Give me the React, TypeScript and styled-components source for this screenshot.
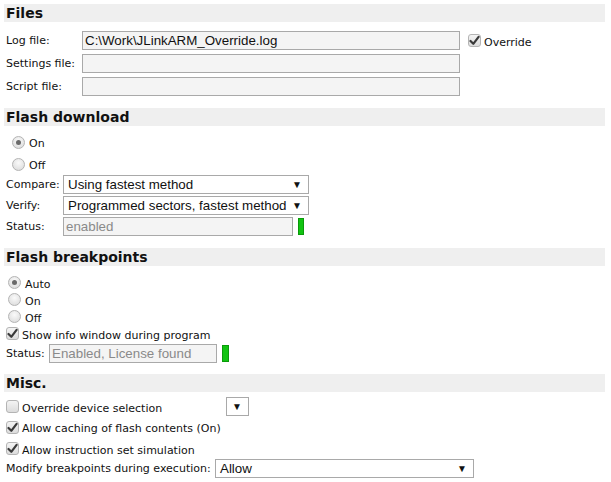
import React from "react";
import styled, {createGlobalStyle} from "styled-components";

const GlobalStyle = createGlobalStyle`
    html, body {
        margin: 0;
        padding: 0;
        background: #ffffff;
    }
    body {
        font-family: "DejaVu Sans", Verdana, sans-serif;
        font-size: 11px;
        color: #111111;
    }
`

const Page = styled.div`
    box-sizing: border-box;
    width: 611px;
    padding: 4px 6px 0 4px;
    display: flex;
    flex-direction: column;
`

const SectionHeader = styled.div`
    box-sizing: border-box;
    height: 18px;
    padding-left: 2px;
    background: #efefef;
    font-weight: bold;
    font-size: 14px;
    line-height: 18px;
    color: #111111;
`

const SectionBody = styled.div<{ $pad: string }>`
    display: flex;
    flex-direction: column;
    padding: ${({$pad}) => $pad};
`

const Row = styled.div<{ $height?: number; $gap?: number; $indent?: number }>`
    display: flex;
    align-items: center;
    height: ${({$height}) => $height ?? 19}px;
    margin-top: ${({$gap}) => $gap ?? 0}px;
    padding-left: ${({$indent}) => $indent ?? 2}px;
`

const Label = styled.span<{ $width?: number; $drop?: number }>`
    width: ${({$width}) => ($width ? `${$width}px` : "auto")};
    flex-shrink: 0;
    white-space: nowrap;
    padding-top: ${({$drop}) => $drop ?? 0}px;
`

const TextField = styled.div<{ $width: number; $muted?: boolean }>`
    box-sizing: border-box;
    width: ${({$width}) => $width}px;
    height: 19px;
    border: 1px solid #a9a9a9;
    background: #f4f4f4;
    padding-left: 2px;
    font-family: "Liberation Sans", Arial, sans-serif;
    font-size: 13.33px;
    line-height: 17px;
    color: ${({$muted}) => ($muted ? "#8a8a8a" : "#111111")};
    white-space: nowrap;
    overflow: hidden;
`

const SelectBox = styled.div<{ $width: number }>`
    box-sizing: border-box;
    width: ${({$width}) => $width}px;
    height: 19px;
    border: 1px solid #a9a9a9;
    background: #ffffff;
    padding: 0 6px 0 4px;
    display: flex;
    align-items: center;
    font-family: "Liberation Sans", Arial, sans-serif;
    font-size: 13.33px;
    color: #111111;
    white-space: nowrap;
`

const Arrow = styled.span`
    font-size: 10px;
    color: #111111;
    margin-left: auto;
`

const StatusLed = styled.div<{ $width: number }>`
    width: ${({$width}) => $width}px;
    height: 17px;
    margin-left: 5px;
    background: #11c411;
    border: 1px solid #0a9a0a;
    box-sizing: border-box;
`

const RadioCircle = styled.span<{ $checked?: boolean }>`
    box-sizing: border-box;
    position: relative;
    width: 13px;
    height: 13px;
    border-radius: 50%;
    border: 1px solid #b4b4b4;
    background: radial-gradient(circle at 50% 35%, #fafafa 0%, #e2e2e2 70%, #d4d4d4 100%);
    margin-right: 4px;
    flex-shrink: 0;

    &::after {
        content: "";
        display: ${({$checked}) => ($checked ? "block" : "none")};
        position: absolute;
        left: 3px;
        top: 3px;
        width: 5px;
        height: 5px;
        border-radius: 50%;
        background: #6a6a6a;
    }
`

const CheckBoxBox = styled.span`
    box-sizing: border-box;
    width: 13px;
    height: 13px;
    border-radius: 3px;
    border: 1px solid #b4b4b4;
    background: linear-gradient(#f4f4f4, #dcdcdc);
    margin-right: 3px;
    flex-shrink: 0;
    display: flex;
    align-items: center;
    justify-content: center;
`

const CheckBox: React.FC<{ checked?: boolean }> = ({checked}) => (
    <CheckBoxBox>
        {checked && (
            <svg width="11" height="11" viewBox="0 0 11 11">
                <path d="M1.5 6 L4.3 8.8 L9.6 1.8" fill="none" stroke="#3a3a3a" strokeWidth="2.2"
                      strokeLinecap="round" strokeLinejoin="round"/>
            </svg>
        )}
    </CheckBoxBox>
)

const Radio: React.FC<{ checked?: boolean; label: string; indent: number; height: number }> = (props) => (
    <Row $height={props.height} $indent={props.indent}>
        <RadioCircle $checked={props.checked}/>
        <Label $drop={3}>{props.label}</Label>
    </Row>
)

const Spacer = styled.span<{ $width: number }>`
    width: ${({$width}) => $width}px;
    flex-shrink: 0;
`

export default function App() {
    return (
        <>
            <GlobalStyle/>
            <Page>
                <SectionHeader>Files</SectionHeader>
                <SectionBody $pad="9px 0 12px 0">
                    <Row>
                        <Label $width={76}>Log file:</Label>
                        <TextField $width={378}>C:\Work\JLinkARM_Override.log</TextField>
                        <Spacer $width={8}/>
                        <CheckBox checked/>
                        <Label $drop={3}>Override</Label>
                    </Row>
                    <Row $gap={4}>
                        <Label $width={76}>Settings file:</Label>
                        <TextField $width={378}/>
                    </Row>
                    <Row $gap={4}>
                        <Label $width={76}>Script file:</Label>
                        <TextField $width={378}/>
                    </Row>
                </SectionBody>

                <SectionHeader>Flash download</SectionHeader>
                <SectionBody $pad="5px 0 12px 0">
                    <Radio checked label="On" indent={8} height={22}/>
                    <Radio label="Off" indent={8} height={22}/>
                    <Row>
                        <Label $width={57}>Compare:</Label>
                        <SelectBox $width={246}>Using fastest method<Arrow>▼</Arrow></SelectBox>
                    </Row>
                    <Row $gap={2}>
                        <Label $width={57}>Verify:</Label>
                        <SelectBox $width={246}>Programmed sectors, fastest method<Arrow>▼</Arrow></SelectBox>
                    </Row>
                    <Row $gap={2}>
                        <Label $width={57}>Status:</Label>
                        <TextField $width={230} $muted>enabled</TextField>
                        <StatusLed $width={6}/>
                    </Row>
                </SectionBody>

                <SectionHeader>Flash breakpoints</SectionHeader>
                <SectionBody $pad="8px 0 11px 0">
                    <Radio checked label="Auto" indent={4} height={17}/>
                    <Radio label="On" indent={4} height={17}/>
                    <Radio label="Off" indent={4} height={17}/>
                    <Row $height={17}>
                        <CheckBox checked/>
                        <Label $drop={3}>Show info window during program</Label>
                    </Row>
                    <Row $gap={2}>
                        <Label $width={43}>Status:</Label>
                        <TextField $width={168} $muted>Enabled, License found</TextField>
                        <StatusLed $width={7}/>
                    </Row>
                </SectionBody>

                <SectionHeader>Misc.</SectionHeader>
                <SectionBody $pad="5px 0 0 0">
                    <Row>
                        <CheckBox/>
                        <Label $width={204} $drop={3}>Override device selection</Label>
                        <SelectBox $width={23}><Arrow>▼</Arrow></SelectBox>
                    </Row>
                    <Row $height={22}>
                        <CheckBox checked/>
                        <Label $drop={3}>Allow caching of flash contents (On)</Label>
                    </Row>
                    <Row $height={21}>
                        <CheckBox checked/>
                        <Label $drop={3}>Allow instruction set simulation</Label>
                    </Row>
                    <Row>
                        <Label $width={209}>Modify breakpoints during execution:</Label>
                        <SelectBox $width={259}>Allow<Arrow>▼</Arrow></SelectBox>
                    </Row>
                </SectionBody>
            </Page>
        </>
    );
}
